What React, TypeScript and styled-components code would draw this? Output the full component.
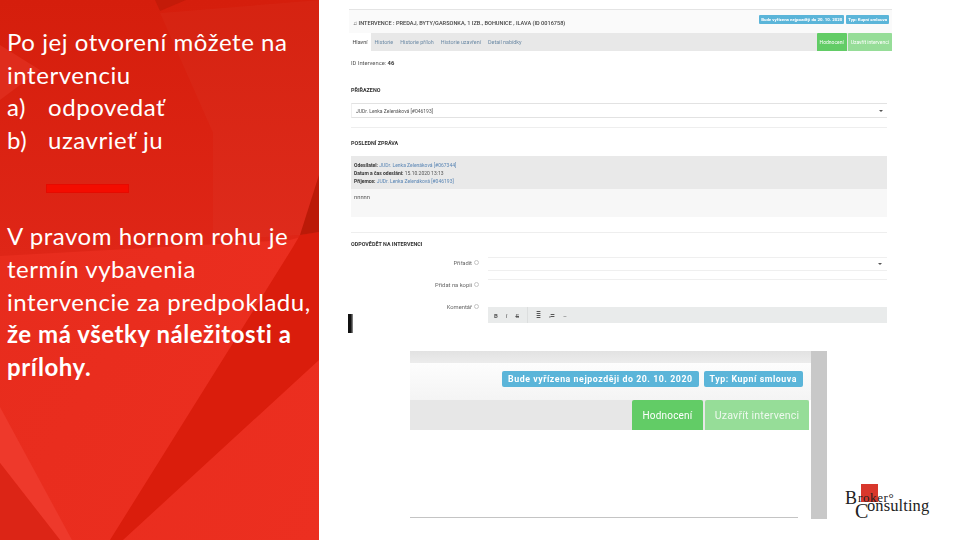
import React from "react";
import styled, { createGlobalStyle } from "styled-components";

const Global = createGlobalStyle`
  html, body {
    margin: 0;
    padding: 0;
    width: 960px;
    height: 540px;
    overflow: hidden;
    background: #fff;
  }
`;

const Slide = styled.div`
  display: flex;
  position: relative;
  width: 960px;
  height: 540px;
  overflow: hidden;
  background: #fff;
  font-family: Roboto, "Liberation Sans", sans-serif;
`;

const Aside = styled.aside`
  position: relative;
  flex: 0 0 319px;
  box-sizing: border-box;
  height: 540px;
  padding: 26px 0 0 7px;
  color: #fff;
  font-family: Lato, "Open Sans", sans-serif;
  font-size: 24px;
  line-height: 32.6px;
  letter-spacing: 0.55px;
`;

const AsideArt = styled.svg`
  position: absolute;
  inset: 0;
  z-index: 0;
`;

const Para = styled.p`
  position: relative;
  z-index: 1;
  margin: 0;
  width: 311px;
  white-space: nowrap;
`;

const Marker = styled.span`
  display: inline-block;
  width: 41px;
`;

const Accent = styled.div`
  position: relative;
  z-index: 1;
  box-sizing: border-box;
  width: 83px;
  height: 9px;
  margin: 28px 0 27px 39px;
  background: #f40c00;
  border: 1.5px solid #e60a00;
`;

const Main = styled.main`
  flex: 1;
  display: flex;
  flex-direction: column;
  padding: 9px 0 0 30px;
`;

const Shot = styled.div`
  position: relative;
  box-sizing: border-box;
  width: 543px;
  height: 324px;
  filter: blur(0.4px);
  color: #555;
  font-size: 5.8px;
  border-top: 1px solid #e4e4e4;
`;

const ShotHead = styled.div`
  display: flex;
  align-items: center;
  justify-content: space-between;
  box-sizing: border-box;
  height: 23px;
  padding: 3px 3px 0 4px;
  background: #fafafa;
  color: #444;
  font-size: 5.6px;
  font-weight: 500;
`;

const Badges = styled.div`
  display: flex;
  gap: 2px;
  margin-top: -7px;
`;

const Badge = styled.span`
  display: block;
  padding: 2px 2px;
  border-radius: 1px;
  background: #5bb5d9;
  color: #fff;
  font-size: 4.4px;
  font-weight: 700;
  white-space: nowrap;
`;

const TabRow = styled.div`
  display: flex;
  align-items: stretch;
  height: 18px;
  background: #e8e8e8;
`;

const Tab = styled.span<{ $active?: boolean }>`
  display: flex;
  align-items: center;
  padding: 0 3.5px;
  background: ${(p) => (p.$active ? "#fff" : "transparent")};
  color: ${(p) => (p.$active ? "#444" : "#6c8aa5")};
  font-size: 5.4px;
`;

const TabActions = styled.div`
  display: flex;
  gap: 1px;
  margin-left: auto;
`;

const TabButton = styled.span<{ $soft?: boolean }>`
  display: flex;
  align-items: center;
  padding: 0 3px;
  border-radius: 1px 1px 0 0;
  background: ${(p) => (p.$soft ? "#96dd98" : "#62cc66")};
  color: #fff;
  font-size: 5px;
`;

const IdLine = styled.div`
  height: 9px;
  margin: 8px 0 0 2px;
  line-height: 9px;

  b {
    color: #333;
  }
`;

const SectionTitle = styled.h4`
  margin: 0 0 0 2px;
  height: 8px;
  line-height: 8px;
  font-size: 5.4px;
  font-weight: 700;
  color: #333;
`;

const SelectBox = styled.div`
  display: flex;
  align-items: center;
  justify-content: space-between;
  box-sizing: border-box;
  height: 15px;
  width: 536px;
  margin: 9px 0 0 2px;
  padding: 0 4px;
  border: 1px solid #e2e2e2;
  border-left-color: #efefef;
  border-right: 0;
  font-size: 5px;

  &::after {
    content: "";
    border-top: 2.5px solid #555;
    border-left: 2px solid transparent;
    border-right: 2px solid transparent;
  }
`;

const Rule = styled.hr<{ $top: number; $bottom: number; $hidden?: boolean }>`
  width: 536px;
  height: 1px;
  margin: ${(p) => p.$top}px 0 ${(p) => p.$bottom}px 2px;
  border: 0;
  background: ${(p) => (p.$hidden ? "transparent" : "#eeeeee")};
`;

const MessageMeta = styled.div`
  box-sizing: border-box;
  width: 536px;
  height: 33px;
  margin: 9px 0 0 2px;
  padding: 5px 3px;
  background: #e9e9e9;
  font-size: 5px;
  line-height: 8px;

  b {
    color: #333;
  }

  a {
    color: #5a86b5;
  }
`;

const MessageBody = styled.div`
  box-sizing: border-box;
  width: 536px;
  height: 28px;
  margin-left: 2px;
  padding: 5px 3px;
  background: #f7f7f7;
`;

const FormList = styled.div`
  margin-top: 9px;
`;

const FormRow = styled.div`
  display: grid;
  grid-template-columns: 130px 399px;
  column-gap: 9px;
  height: 22px;
`;

const FieldLabel = styled.label`
  justify-self: end;
  padding-top: 3px;
  color: #666;
  white-space: nowrap;

  &::after {
    content: "";
    display: inline-block;
    width: 3px;
    height: 3px;
    margin-left: 2px;
    border: 1px solid #c4c4c4;
    border-radius: 50%;
  }
`;

const FieldInput = styled.div`
  display: flex;
  align-items: center;
  justify-content: flex-end;
  box-sizing: border-box;
  height: 14px;
  padding-right: 5px;
  border-top: 1px solid #efefef;
  border-bottom: 1px solid #efefef;

  &::after {
    content: "";
    border-top: 2.5px solid #555;
    border-left: 2px solid transparent;
    border-right: 2px solid transparent;
  }
`;

const PlainInput = styled.div`
  height: 15px;
  border-top: 1px solid #efefef;
`;

const EditorBar = styled.div`
  display: flex;
  align-items: center;
  gap: 8px;
  height: 16px;
  margin-top: 6px;
  padding-left: 6px;
  background: #e9ebeb;
  color: #555;
  font-size: 6px;
`;

const BarDivider = styled.span`
  width: 1px;
  height: 16px;
  background: #dcdede;
`;

const BlackMark = styled.span`
  position: absolute;
  left: -1px;
  bottom: 0;
  width: 5px;
  height: 19px;
  background: linear-gradient(90deg, #111 55%, #999);
`;

const CloseUp = styled.div`
  display: grid;
  grid-template-columns: 401px 16px;
  width: 417px;
  height: 168px;
  margin: 18px 0 0 61px;
  filter: blur(0.3px);
`;

const CloseMain = styled.div`
  display: flex;
  flex-direction: column;
  height: 168px;
`;

const CloseTop = styled.div`
  height: 12px;
  background: linear-gradient(#e2e2e2, #ececec);
`;

const CloseHead = styled.div`
  display: flex;
  justify-content: flex-end;
  gap: 5px;
  box-sizing: border-box;
  height: 37px;
  padding: 8px 8px 0 0;
  background: linear-gradient(#fdfdfd, #f4f4f4);
`;

const BigBadge = styled.span`
  display: block;
  height: 16px;
  padding: 0 6px;
  border-radius: 2px;
  background: #5bb5d9;
  color: #fff;
  font-size: 8.8px;
  font-weight: 700;
  line-height: 16px;
  letter-spacing: 0.55px;
  white-space: nowrap;
`;

const CloseTabs = styled.div`
  display: flex;
  justify-content: flex-end;
  gap: 2px;
  height: 30px;
  margin-right: 2px;
  background: #e7e7e7;
`;

const BigButton = styled.span<{ $soft?: boolean }>`
  display: flex;
  align-items: center;
  justify-content: center;
  width: ${(p) => (p.$soft ? "104px" : "71px")};
  border-radius: 2px 2px 0 0;
  background: ${(p) => (p.$soft ? "#96dd98" : "#62cc66")};
  color: ${(p) => (p.$soft ? "#eef9ee" : "#fff")};
  font-size: ${(p) => (p.$soft ? "10.6px" : "10px")};
  letter-spacing: 0.2px;
`;

const CloseLine = styled.div`
  width: 388px;
  height: 1px;
  margin-top: auto;
  margin-bottom: 1px;
  background: #c4c4c4;
`;

const Scrollbar = styled.div`
  background: #c8c8c8;
`;

const Logo = styled.div`
  position: absolute;
  left: 843px;
  top: 484px;
  width: 90px;
  height: 36px;
  font-family: "Liberation Serif", serif;
  color: #222;
`;

const LogoSquare = styled.span`
  position: absolute;
  left: 18px;
  top: 0;
  width: 17px;
  height: 18px;
  background: #d8372c;
`;

const LogoBig = styled.span<{ $c?: boolean }>`
  position: absolute;
  left: ${(p) => (p.$c ? "12px" : "2px")};
  top: ${(p) => (p.$c ? "18px" : "6px")};
  font-size: ${(p) => (p.$c ? "20px" : "18px")};
  line-height: ${(p) => (p.$c ? "18px" : "16px")};
`;

const LogoSmall = styled.span<{ $low?: boolean }>`
  position: absolute;
  left: ${(p) => (p.$low ? "24px" : "15px")};
  top: ${(p) => (p.$low ? "13px" : "8px")};
  font-size: ${(p) => (p.$low ? "16.5px" : "13px")};
  line-height: ${(p) => (p.$low ? "17px" : "11px")};
  letter-spacing: ${(p) => (p.$low ? "0.1px" : "0.6px")};
  white-space: nowrap;
`;

const tabs = ["Historie", "Historie příloh", "Historie uzavření", "Detail nabídky"];

export default function App() {
  return (
    <Slide>
      <Global />
      <Aside>
        <AsideArt width="319" height="540" viewBox="0 0 319 540">
          <defs>
            <linearGradient id="base" x1="0" y1="0" x2="1" y2="1">
              <stop offset="0" stopColor="#e62b1c" />
              <stop offset="1" stopColor="#ec2f20" />
            </linearGradient>
            <linearGradient id="top" x1="0" y1="0" x2="0" y2="1">
              <stop offset="0" stopColor="#d51e0c" />
              <stop offset="1" stopColor="#df2617" />
            </linearGradient>
          </defs>
          <rect width="319" height="540" fill="url(#base)" />
          <polygon points="0,0 319,0 319,232 290,240 0,256" fill="url(#top)" />
          <polygon points="160,13 319,0 319,178 300,235 213,240 213,133" fill="#ffffff" opacity="0.025" />
          <polygon points="0,45 40,70 0,100" fill="#df2c1c" />
          <polygon points="155,0 186,0 160,11" fill="#c41b09" />
          <polygon points="293,247 300,235 319,232 319,360 123,540 110,540" fill="#da1d0c" />
          <polygon points="300,235 319,175 319,232" fill="#bb1a08" />
          <polygon points="0,407 72,540 60,540 0,463" fill="#ee392b" />
          <polygon points="0,463 60,540 0,540" fill="#dc2516" />
        </AsideArt>
        <Para>
          Po jej otvorení môžete na
          <br />
          intervenciu
          <br />
          <Marker>a)</Marker>odpovedať
          <br />
          <Marker>b)</Marker>uzavrieť ju
        </Para>
        <Accent />
        <Para>
          V pravom hornom rohu je
          <br />
          termín vybavenia
          <br />
          intervencie za predpokladu,
          <br />
          <b>
            že má všetky náležitosti a
            <br />
            prílohy.
          </b>
        </Para>
      </Aside>
      <Main>
        <Shot>
          <ShotHead>
            <span>♫ INTERVENCE : PREDAJ, BYTY/GARSONKA, 1 IZB., BOHUNICE , ILAVA (ID 0016758)</span>
            <Badges>
              <Badge>Bude vyřízena nejpozději do 20. 10. 2020</Badge>
              <Badge>Typ: Kupní smlouva</Badge>
            </Badges>
          </ShotHead>
          <TabRow>
            <Tab $active>Hlavní</Tab>
            {tabs.map((t) => (
              <Tab key={t}>{t}</Tab>
            ))}
            <TabActions>
              <TabButton>Hodnocení</TabButton>
              <TabButton $soft>Uzavřít intervenci</TabButton>
            </TabActions>
          </TabRow>
          <IdLine>
            ID Intervence: <b>46</b>
          </IdLine>
          <Rule $hidden $top={0} $bottom={17} />
          <SectionTitle>PŘIŘAZENO</SectionTitle>
          <SelectBox>JUDr. Lenka Zelenáková [#046193]</SelectBox>
          <Rule $top={9} $bottom={11} />
          <SectionTitle>POSLEDNÍ ZPRÁVA</SectionTitle>
          <MessageMeta>
            <b>Odesílatel:</b> <a>JUDr. Lenka Zelenáková [#067344]</a>
            <br />
            <b>Datum a čas odeslání:</b> 15.10.2020 13:13
            <br />
            <b>Příjemce:</b> <a>JUDr. Lenka Zelenáková [#046193]</a>
          </MessageMeta>
          <MessageBody>nnnnn</MessageBody>
          <Rule $top={15} $bottom={7} />
          <SectionTitle>ODPOVĚDĚT NA INTERVENCI</SectionTitle>
          <FormList>
            <FormRow>
              <FieldLabel>Přiřadit</FieldLabel>
              <FieldInput />
            </FormRow>
            <FormRow>
              <FieldLabel>Přidat na kopii</FieldLabel>
              <PlainInput />
            </FormRow>
            <FormRow>
              <FieldLabel>Komentář</FieldLabel>
              <EditorBar>
                <b>B</b>
                <i>I</i>
                <s>S</s>
                <BarDivider />
                <span>≣</span>
                <span>≔</span>
                <span>–</span>
              </EditorBar>
            </FormRow>
          </FormList>
          <BlackMark />
        </Shot>
        <CloseUp>
          <CloseMain>
            <CloseTop />
            <CloseHead>
              <BigBadge>Bude vyřízena nejpozději do 20. 10. 2020</BigBadge>
              <BigBadge>Typ: Kupní smlouva</BigBadge>
            </CloseHead>
            <CloseTabs>
              <BigButton>Hodnocení</BigButton>
              <BigButton $soft>Uzavřít intervenci</BigButton>
            </CloseTabs>
            <CloseLine />
          </CloseMain>
          <Scrollbar />
        </CloseUp>
      </Main>
      <Logo>
        <LogoSquare />
        <LogoBig>B</LogoBig>
        <LogoSmall>roker°</LogoSmall>
        <LogoBig $c>C</LogoBig>
        <LogoSmall $low>onsulting</LogoSmall>
      </Logo>
    </Slide>
  );
}
